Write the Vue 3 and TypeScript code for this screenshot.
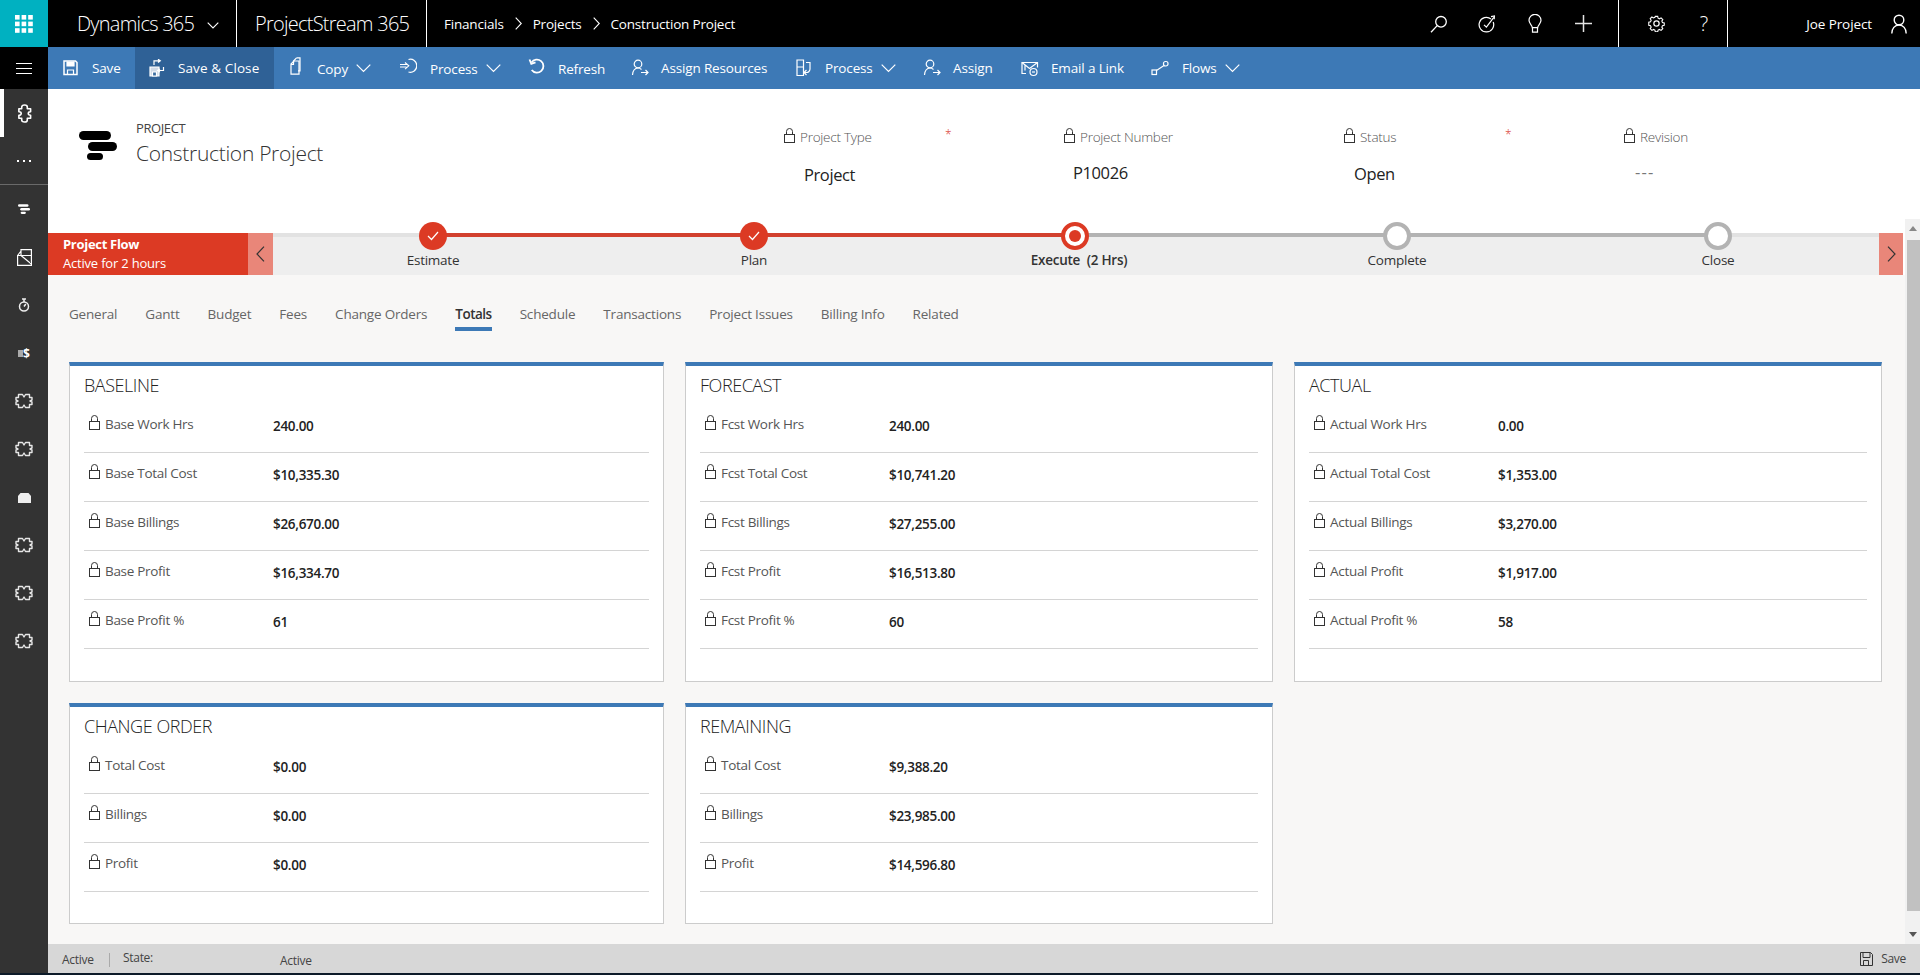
<script setup lang="ts">
const crumbs = ['Financials', 'Projects', 'Construction Project']
interface Cmd { label: string; icon: string; w: number; gap: number; chevron?: boolean; active?: boolean; low?: boolean }
const commands: Cmd[] = [
  { label: 'Save', icon: 'save', w: 87, gap: 30 },
  { label: 'Save & Close', icon: 'saveclose', w: 139, gap: 30, active: true },
  { label: 'Copy', icon: 'copy', w: 111, gap: 29, chevron: true, low: true },
  { label: 'Process', icon: 'process', w: 129, gap: 31, chevron: true, low: true },
  { label: 'Refresh', icon: 'refresh', w: 103, gap: 30, low: true },
  { label: 'Assign Resources', icon: 'assignres', w: 164, gap: 30 },
  { label: 'Process', icon: 'process2', w: 128, gap: 30, chevron: true },
  { label: 'Assign', icon: 'assign', w: 98, gap: 30 },
  { label: 'Email a Link', icon: 'email', w: 130, gap: 30 },
  { label: 'Flows', icon: 'flows', w: 110, gap: 31, chevron: true },
]
const headerFields = [
  { label: 'Project Type', value: 'Project', req: true, cls: 'v1' },
  { label: 'Project Number', value: 'P10026', req: false, cls: 'v2' },
  { label: 'Status', value: 'Open', req: true, cls: 'v3' },
  { label: 'Revision', value: '---', req: false, cls: 'v4' },
]
const steps = [
  { label: 'Estimate', state: 'done', x: 160 },
  { label: 'Plan', state: 'done', x: 321 },
  { label: 'Execute', extra: '(2 Hrs)', state: 'current', x: 321 },
  { label: 'Complete', state: 'todo', x: 322 },
  { label: 'Close', state: 'todo', x: 321 },
]
const tabs = ['General', 'Gantt', 'Budget', 'Fees', 'Change Orders', 'Totals', 'Schedule', 'Transactions', 'Project Issues', 'Billing Info', 'Related']
const cards = [
  { title: 'BASELINE', rows: [['Base Work Hrs', '240.00'], ['Base Total Cost', '$10,335.30'], ['Base Billings', '$26,670.00'], ['Base Profit', '$16,334.70'], ['Base Profit %', '61']] },
  { title: 'FORECAST', rows: [['Fcst Work Hrs', '240.00'], ['Fcst Total Cost', '$10,741.20'], ['Fcst Billings', '$27,255.00'], ['Fcst Profit', '$16,513.80'], ['Fcst Profit %', '60']] },
  { title: 'ACTUAL', rows: [['Actual Work Hrs', '0.00'], ['Actual Total Cost', '$1,353.00'], ['Actual Billings', '$3,270.00'], ['Actual Profit', '$1,917.00'], ['Actual Profit %', '58']] },
  { title: 'CHANGE ORDER', rows: [['Total Cost', '$0.00'], ['Billings', '$0.00'], ['Profit', '$0.00']] },
  { title: 'REMAINING', rows: [['Total Cost', '$9,388.20'], ['Billings', '$23,985.00'], ['Profit', '$14,596.80']] },
]
const sideIcons = ['logo', 'book', 'timer', 'money', 'puzzle', 'puzzle', 'box', 'puzzle', 'puzzle', 'puzzle']
</script>

<template>
  <div class="page">
    <header class="topbar">
      <div class="tile">
        <svg width="18" height="18" viewBox="0 0 18 18" fill="#fff"><g>
          <rect x="0" y="0" width="4.6" height="4.6"/><rect x="6.6" y="0" width="4.6" height="4.6"/><rect x="13.2" y="0" width="4.6" height="4.6"/>
          <rect x="0" y="6.6" width="4.6" height="4.6"/><rect x="6.6" y="6.6" width="4.6" height="4.6"/><rect x="13.2" y="6.6" width="4.6" height="4.6"/>
          <rect x="0" y="13.2" width="4.6" height="4.6"/><rect x="6.6" y="13.2" width="4.6" height="4.6"/><rect x="13.2" y="13.2" width="4.6" height="4.6"/>
        </g></svg>
      </div>
      <div class="app-name">
        <span class="brand">Dynamics 365</span>
        <svg class="brand-chev" width="12" height="7" viewBox="0 0 12 7" fill="none" stroke="#fff" stroke-width="1.1"><path d="M.7.7L6 6l5.3-5.3"/></svg>
      </div>
      <div class="app-name second"><span class="brand">ProjectStream 365</span></div>
      <nav class="crumbs">
        <template v-for="(c, i) in crumbs" :key="c">
          <span>{{ c }}</span>
          <svg v-if="i < crumbs.length - 1" width="7" height="13" viewBox="0 0 7 13" fill="none" stroke="#fff" stroke-width="1.1"><path d="M.7.7l5.6 5.8L.7 12.3"/></svg>
        </template>
      </nav>
      <div class="top-icons">
        <span class="ti"><svg width="18" height="18" viewBox="0 0 18 18" fill="none" stroke="#fff" stroke-width="1.3"><circle cx="11" cy="6.8" r="5.3"/><path d="M7.2 10.6L1 17.2"/></svg></span>
        <span class="ti"><svg width="18" height="18" viewBox="0 0 18 18" fill="none" stroke="#fff" stroke-width="1.2"><path d="M13 4a7.3 7.3 0 1 0 2.2 3"/><path d="M6 9.8l2.4 2.4L15.8 2.4"/><path d="M13 1.600l3.400-.6-.2 3.200"/></svg></span>
        <span class="ti"><svg width="14" height="19" viewBox="0 0 14 19" fill="none" stroke="#fff" stroke-width="1.2"><path d="M4.3 13.6c0-2.600-3.300-3.800-3.300-7.300a6 6 0 0 1 12 0c0 3.500-3.300 4.700-3.300 7.300z"/><path d="M4.500 13.600v4.600h5v-4.600"/></svg></span>
        <span class="ti"><svg width="17" height="17" viewBox="0 0 17 17" fill="none" stroke="#e4e4e4" stroke-width="1.5"><path d="M8.5 0v17M0 8.500h17"/></svg></span>
      </div>
      <div class="top-help">
        <span class="ti"><svg width="17" height="17" viewBox="0 0 18 18" fill="none" stroke="#fff" stroke-width="1.3"><circle cx="9" cy="9" r="2.8"/><path d="M7.600 1.200h2.800l.5 2.100 1.600.7 1.900-1.100 2 2-1.100 1.900.7 1.600 2.100.5v2.800l-2.100.5-.7 1.600 1.100 1.900-2 2-1.900-1.100-1.600.7-.5 2.100H7.600l-.5-2.100-1.600-.7-1.900 1.100-2-2 1.100-1.900-.7-1.600-2.100-.5V7.900l2.100-.5.700-1.600-1.100-1.900 2-2 1.900 1.100 1.600-.7z" transform="translate(.9 .4) scale(.9)"/></svg></span>
        <span class="ti help">?</span>
      </div>
      <div class="user">
        <span>Joe Project</span>
        <svg width="16" height="20" viewBox="0 0 16 20" fill="none" stroke="#fff" stroke-width="1.4"><circle cx="8" cy="6" r="4.800"/><path d="M.8 19.500c0-5 3-8.500 7.200-8.500s7.200 3.500 7.200 8.500"/></svg>
      </div>
    </header>

    <div class="commandbar">
      <div class="hamburger"><span></span><span></span><span></span></div>
      <div v-for="c in commands" :key="c.label + c.icon" class="cmd" :class="{ active: c.active, low: c.low }" :style="{ width: c.w + 'px' }">
        <span class="cmd-icon" :style="{ width: c.gap + 'px' }">
          <svg width="18" height="18" viewBox="0 0 18 18" fill="none" stroke="#fff" stroke-width="1.2">
            <template v-if="c.icon === 'save'"><path d="M2 2h11.500L15 3.500V15.500H2z" stroke-width="1.5"/><path d="M5 2.500v4.500h7V2.500" fill="#fff"/><path d="M5.500 15v-4h6v4"/></template>
            <template v-else-if="c.icon === 'saveclose'"><path d="M2 8h9v9H2z" fill="#cfd9e6" stroke="#fff"/><path d="M4.500 13h4v4h-4z" fill="#3a6ca0"/><path d="M6 6V1.800h6M10 .2l2.300 1.600L10 3.500M15.500 8v3.500h-6M12 10l-2.500 1.500L12 13"/></template>
            <template v-else-if="c.icon === 'copy'"><path d="M8.500.8l-3 3.200v2"/><path d="M8.500.8h3.500v13H10"/><path d="M3 7l3-3h5v13.200H3z"/><path d="M5.500 4.500V7.500H3"/></template>
            <template v-else-if="c.icon === 'process'"><path d="M1 7.500h6.500M1 10h6.500M6 5.500L9.800 8.800 6 12.200" stroke-width="1.1"/><path d="M9.500 2.500a6.500 6.500 0 1 1 0 12.500"/></template>
            <template v-else-if="c.icon === 'refresh'"><path d="M3.500 5.500a6.500 6.500 0 1 1 .2 7.500" stroke-width="1.8"/><path d="M1.500 2.500l1.800 4.400 4.200-1.500" stroke-width="1.8"/></template>
            <template v-else-if="c.icon === 'assignres'"><circle cx="7" cy="5" r="3.800"/><path d="M1.500 16c0-4 2.300-7 5.500-7 1.500 0 2.500.5 3.500 1.500"/><path d="M10 13.500h7M14.500 11l2.500 2.500-2.500 2.500"/></template>
            <template v-else-if="c.icon === 'process2'"><path d="M2 1h6.500v7H2zM2 8h6.500v8.500H2z"/><path d="M11 3.500h4V10a3.500 3.500 0 0 1-3.500 3.500H9M11.500 11L9 13.500l2.500 2.500"/></template>
            <template v-else-if="c.icon === 'assign'"><circle cx="7" cy="5" r="3.800"/><path d="M1.500 16c0-4 2.300-7 5.500-7 1.500 0 2.500.5 3.500 1.500"/><path d="M10 13.500h7M14.500 11l2.500 2.500-2.500 2.500"/></template>
            <template v-else-if="c.icon === 'email'"><path d="M5 14.500H1v-11h15.500v5"/><path d="M1 3.500l7.500 6 8-6M4 6v5.500"/><circle cx="12.500" cy="13" r="3.500"/><path d="M11 13h3"/></template>
            <template v-else><rect x="1" y="11" width="4.500" height="4.500"/><rect x="12.500" y="2.500" width="4.500" height="4.500" rx="2"/><path d="M5.500 11.500L13 6.500"/></template>
          </svg>
        </span>
        <span class="cmd-label">{{ c.label }}</span>
        <svg v-if="c.chevron" class="cmd-chev" width="15" height="9" viewBox="0 0 15 9" fill="none" stroke="#fff" stroke-width="1.2"><path d="M.7.7l6.800 6.800L14.300.7"/></svg>
      </div>
    </div>

    <div class="body">
      <aside class="sidebar">
        <div class="side-home">
          <svg width="15" height="19" viewBox="0 0 16 20" fill="none" stroke="#fff" stroke-width="1.7" stroke-linejoin="round"><path d="M5 5V3.200Q5 1 8 1t3 2.200V5h3.500v3.200Q12 8.200 12 10t2.500 1.800V15H11v1.800Q11 19 8 19t-3-2.200V15H2v-3.200Q4.500 11.800 4.500 10T2 8.200V5z"/></svg>
        </div>
        <div class="side-more"><span></span><span></span><span></span></div>
        <div class="side-list">
          <div v-for="(s, i) in sideIcons" :key="i" class="side-item">
            <svg v-if="s === 'logo'" width="12" height="10" viewBox="0 0 16 13" fill="#fff"><rect x="0" y="0" width="14" height="3.500" rx="1.700"/><rect x="3" y="5" width="13" height="3.500" rx="1.700"/><rect x="3.500" y="10" width="7" height="3" rx="1.500"/></svg>
            <svg v-else-if="s === 'book'" width="15" height="17" viewBox="0 0 15 17" fill="none" stroke="#fff" stroke-width="1.2"><path d="M.6 16.400V6.500h13.800v9.900zM.6 6.500L4 2M4 6.500V.6h10.400v15.800M4 6.500l10.400 8.500"/></svg>
            <svg v-else-if="s === 'timer'" width="12" height="14" viewBox="0 0 12 14" fill="none" stroke="#eee" stroke-width="1.5"><circle cx="6" cy="8.500" r="4.500"/><path d="M6 8.500l1.800-2.500M4 1h4M6 1v3"/></svg>
            <span v-else-if="s === 'money'" class="money"><i></i>$</span>
            <svg v-else-if="s === 'box'" width="13" height="11" viewBox="0 0 13 11" fill="#eee"><path d="M0 4L2.500 1h8L13 4v7H0z"/></svg>
            <svg v-else width="18" height="16" viewBox="0 0 18 16" fill="none" stroke="#e6e6e6" stroke-width="1.4" stroke-linejoin="round"><path d="M3.500 3V1.500h4L9 4l1.500-2.500h4v3H17V7l-2 1 2 1v2.500h-2.500v3h-4L9 12l-1.500 2.500h-4v-3H1V9l2-1-2-1V4.500h2.500z"/></svg>
          </div>
        </div>
      </aside>

      <main class="main">
        <section class="record">
          <div class="record-title">
            <svg class="logo" width="38" height="30" viewBox="0 0 38 30" fill="#000"><rect x="0" y="0" width="32" height="9" rx="4.500"/><rect x="9" y="11" width="29" height="9" rx="4.500"/><rect x="8" y="22" width="16" height="7" rx="3.500"/></svg>
            <div>
              <div class="entity">PROJECT</div>
              <div class="record-name">Construction Project</div>
            </div>
          </div>
          <div class="record-fields">
            <div v-for="f in headerFields" :key="f.label" class="hfield">
              <div class="hlabel">
                <svg class="lock" width="11" height="15" viewBox="0 0 11 15" fill="none" stroke="#333" stroke-width="1"><rect x=".5" y="6.500" width="10" height="8"/><path d="M2.500 6.500V3.500a3 3 0 0 1 6 0v3"/></svg>
                <span>{{ f.label }}</span>
                <i v-if="f.req" class="req">*</i>
              </div>
              <div class="hvalue" :class="f.cls">{{ f.value }}</div>
            </div>
          </div>
        </section>

        <section class="flow">
          <div class="flow-head">
            <strong>Project Flow</strong>
            <span>Active for 2 hours</span>
          </div>
          <div class="flow-arrow"><svg width="9" height="16" viewBox="0 0 9 16" fill="none" stroke="#333" stroke-width="1.2"><path d="M8 .7L1 8l7 7.300"/></svg></div>
          <div class="flow-track">
            <div class="flow-line red"></div>
            <div class="flow-line grey"></div>
            <div v-for="s in steps" :key="s.label" class="step" :style="{ width: s.x + 'px' }">
              <span class="dot" :class="s.state">
                <svg v-if="s.state === 'done'" width="12" height="10" viewBox="0 0 12 10" fill="none" stroke="#fff" stroke-width="1.2"><path d="M1 5l3.500 3.500L11 1"/></svg>
              </span>
              <span class="step-label" :class="{ strong: s.state === 'current' }">{{ s.label }}<template v-if="s.extra">&nbsp; {{ s.extra }}</template></span>
            </div>
          </div>
          <div class="flow-arrow right"><svg width="9" height="16" viewBox="0 0 9 16" fill="none" stroke="#333" stroke-width="1.2"><path d="M1 .7L8 8l-7 7.300"/></svg></div>
        </section>

        <div class="content">
          <div class="form">
            <nav class="tabs">
              <span v-for="t in tabs" :key="t" class="tab" :class="{ on: t === 'Totals' }">{{ t }}</span>
            </nav>
            <div class="cards">
              <article v-for="c in cards" :key="c.title" class="card">
                <h2>{{ c.title }}</h2>
                <div v-for="r in c.rows" :key="r[0]" class="row">
                  <div class="row-label">
                    <svg class="lock" width="11" height="15" viewBox="0 0 11 15" fill="none" stroke="#333" stroke-width="1"><rect x=".5" y="6.500" width="10" height="8"/><path d="M2.500 6.500V3.500a3 3 0 0 1 6 0v3"/></svg>
                    <span>{{ r[0] }}</span>
                  </div>
                  <div class="row-value">{{ r[1] }}</div>
                </div>
              </article>
            </div>
          </div>
          <div class="scrollbar">
            <i class="up"></i>
            <div class="thumb"></div>
            <i class="down"></i>
          </div>
        </div>

        <footer class="status">
          <span class="st-a">Active</span>
          <span class="st-b">State:</span>
          <span class="st-c">Active</span>
          <span class="st-save">
            <svg width="13" height="14" viewBox="0 0 13 14" fill="none" stroke="#333" stroke-width="1"><path d="M.5.500h10l2 2v11H.5z"/><path d="M3 .500v5h7v-5M3.500 13.500v-5h5v5"/></svg>
            Save
          </span>
        </footer>
      </main>
    </div>
  </div>
</template>

<style>
html, body { margin: 0; padding: 0; background: #fff; overflow: hidden; }
</style>

<style scoped>
.page { width: 1920px; height: 975px; display: flex; flex-direction: column; font-family: "Open Sans", "Noto Sans", sans-serif; color: #333; overflow: hidden; }
.topbar { height: 47px; background: #000; color: #fff; display: flex; align-items: center; flex: none; }
.tile { width: 48px; height: 47px; background: #00b1c1; display: flex; align-items: center; justify-content: center; }
.app-name { height: 47px; box-sizing: border-box; width: 189px; padding-left: 29px; border-right: 1px solid #fff; display: flex; align-items: center; }
.app-name.second { width: 190px; padding-left: 18px; }
.brand { font-size: 20px; font-weight: 300; letter-spacing: -.75px; white-space: nowrap; }
.brand-chev { margin-left: 13px; margin-top: 3px; }
.crumbs { display: flex; align-items: center; font-size: 13.5px; letter-spacing: -.2px; margin-left: 17px; gap: 11px; white-space: nowrap; }
.ti { width: 48px; height: 47px; display: flex; align-items: center; justify-content: center; flex: none; }
.top-icons { margin-left: auto; display: flex; align-items: center; box-sizing: border-box; padding-right: 11px; height: 47px; border-right: 1px solid #fff; }
.top-help { width: 109px; height: 47px; box-sizing: border-box; border-right: 1px solid #fff; display: flex; align-items: center; padding-left: 13px; }
.help { font-size: 20px; font-weight: 300; }
.user { width: 192px; box-sizing: border-box; display: flex; align-items: center; justify-content: flex-end; padding-right: 13px; gap: 19px; font-size: 13.5px; letter-spacing: -.1px; }
.commandbar { height: 42px; background: #3d79b6; color: #fff; display: flex; align-items: center; flex: none; font-size: 13.5px; letter-spacing: -.15px; }
.hamburger { width: 48px; height: 42px; background: #000; display: flex; flex-direction: column; justify-content: center; align-items: center; gap: 4px; }
.hamburger span { width: 16px; height: 1px; background: #fff; display: block; }
.cmd { height: 42px; display: flex; align-items: center; box-sizing: border-box; padding-left: 14px; white-space: nowrap; flex: none; }
.cmd.active { background: #2f6196; padding-left: 13px; letter-spacing: .1px; }
.cmd-icon { display: flex; align-items: center; flex: none; }
.cmd.low .cmd-icon { margin-top: -4px; }
.cmd.low .cmd-label { margin-top: 2px; }
.cmd-chev { margin-left: 8px; }
.body { flex: 1; display: flex; min-height: 0; }
.sidebar { width: 48px; flex: none; background: #333; display: flex; flex-direction: column; border-bottom: 2px solid #0c1a28; box-sizing: border-box; }
.side-home { height: 48px; border-left: 4px solid #fff; display: flex; align-items: center; justify-content: center; padding-right: 4px; box-sizing: border-box; width: 48px; }
.side-more { height: 48px; border-bottom: 1px solid #6a6a6a; display: flex; align-items: center; justify-content: center; gap: 4px; box-sizing: border-box; }
.side-more span { width: 2px; height: 2px; background: #fff; display: block; }
.side-list { display: flex; flex-direction: column; }
.side-item { height: 48px; display: flex; align-items: center; justify-content: center; }
.money { color: #fff; font-size: 12px; font-weight: 700; display: flex; align-items: center; letter-spacing: 0; }
.money i { width: 5px; height: 7px; background: #aaa; display: block; margin-top: 1px; }
.main { flex: 1; display: flex; flex-direction: column; min-width: 0; background: #f8f7f6; }
.record { height: 130px; background: #fff; display: flex; flex: none; position: relative; }
.record-title { width: 736px; box-sizing: border-box; padding: 31px 0 0 31px; display: flex; gap: 19px; }
.logo { margin-top: 11px; }
.entity { font-size: 13px; letter-spacing: -.4px; line-height: 16px; color: #444; }
.record-name { font-size: 21px; font-weight: 300; line-height: 28px; margin-top: 3px; letter-spacing: -.3px; color: #333; }
.record-fields { display: flex; padding-top: 39px; }
.hfield { width: 280px; }
.hlabel { position: relative; display: flex; align-items: flex-start; gap: 5px; font-size: 13.5px; font-weight: 300; color: #555; letter-spacing: -.25px; line-height: 18px; }
.req { position: absolute; left: 161px; top: -2px; color: #d9342a; font-style: normal; font-size: 12px; }
.hvalue { font-size: 16.5px; line-height: 24px; color: #222; letter-spacing: -.4px; margin-top: 17px; }
.v1 { padding-left: 20px; }
.v2 { padding-left: 9px; margin-top: 15px; }
.v3 { padding-left: 10px; margin-top: 16px; }
.v4 { padding-left: 11px; margin-top: 14px; color: #777; letter-spacing: 1.2px; }
.flow { flex: none; height: 56px; display: flex; align-items: flex-start; position: relative; background: #fff; }
.flow-head { margin-top: 14px; width: 200px; height: 42px; box-sizing: border-box; background: #dc3a24; color: #fff; padding: 2px 0 0 15px; display: flex; flex-direction: column; font-size: 13px; letter-spacing: -.2px; line-height: 19px; }
.flow-head strong { font-weight: 700; letter-spacing: -.3px; }
.flow-arrow { margin-top: 14px; width: 25px; height: 42px; background: #e98679; display: flex; align-items: center; justify-content: center; flex: none; }
.flow-arrow.right { width: 24px; }
.flow-track { margin-top: 14px; width: 1606px; height: 42px; background: #eee; border-top: 4px solid #e2e2e2; box-sizing: border-box; position: relative; display: flex; }
.flow-line { position: absolute; top: -4px; height: 4px; }
.flow-line.red { left: 160px; width: 642px; background: #d2402e; }
.flow-line.grey { left: 802px; width: 643px; background: #b3b3b3; }
.step { display: flex; flex-direction: column; align-items: flex-end; flex: none; position: relative; height: 38px; }
.dot { position: absolute; right: -14px; top: -15px; width: 28px; height: 28px; box-sizing: border-box; border-radius: 50%; display: flex; align-items: center; justify-content: center; z-index: 1; }
.dot.done { background: #dc3a24; }
.dot.current { background: #fff; border: 4px solid #dc3a24; }
.dot.current::after { content: ""; width: 12px; height: 12px; background: #dc3a24; border-radius: 50%; }
.dot.todo { background: #fff; border: 4px solid #b3b3b3; }
.step-label { position: absolute; right: 0; transform: translateX(50%); top: 14px; font-size: 13.5px; letter-spacing: -.25px; line-height: 18px; white-space: nowrap; color: #333; }
.step-label.strong { font-weight: 600; transform: translateX(calc(50% + 4px)); }
.content { flex: 1; display: flex; min-height: 0; position: relative; }
.form { flex: 1; min-width: 0; padding: 0 0 0 21px; }
.tabs { height: 87px; display: flex; gap: 28px; font-size: 13.5px; letter-spacing: -.2px; color: #666; box-sizing: border-box; padding-top: 30px; align-items: flex-start; }
.tab { height: 26px; line-height: 18px; box-sizing: border-box; white-space: nowrap; }
.tab.on { color: #333; font-weight: 600; border-bottom: 4px solid #3d79b6; letter-spacing: -.5px; }
.cards { display: grid; grid-template-columns: 595px 588px 588px; column-gap: 21px; row-gap: 21px; grid-auto-rows: min-content; }
.card { background: #fff; border: 1px solid #ccc; border-top: 4px solid #3d79b6; box-sizing: border-box; padding: 0 14px; }
.card:nth-child(-n+3) { height: 320px; }
.card:nth-child(n+4) { height: 221px; }
.card h2 { margin: 0; font-size: 18px; font-weight: 300; color: #222; line-height: 24px; height: 31px; padding-top: 7px; letter-spacing: -.45px; box-sizing: content-box; }
.row { height: 49px; border-bottom: 1px solid #d4d4d4; box-sizing: border-box; display: flex; }
.row-label { width: 189px; display: flex; align-items: flex-start; gap: 5px; padding: 11px 0 0 5px; box-sizing: border-box; font-size: 13.5px; letter-spacing: -.3px; color: #555; line-height: 18px; }
.lock { flex: none; }
.row-value { font-size: 13.5px; font-weight: 600; color: #222; padding-top: 13px; letter-spacing: -.3px; line-height: 18px; }
.scrollbar { position: absolute; right: 0; top: -56px; bottom: 0; width: 15px; background: #f1f1f1; display: flex; flex-direction: column; align-items: center; }
.scrollbar .thumb { width: 13px; margin-left: 1px; height: 671px; background: #c1c1c1; margin-top: 9px; }
.scrollbar .up { width: 0; height: 0; border: 4px solid transparent; border-bottom: 5px solid #888; border-top: 0; margin-top: 7px; }
.scrollbar .down { width: 0; height: 0; border: 4px solid transparent; border-top: 5px solid #555; border-bottom: 0; margin-top: auto; margin-bottom: 7px; }
.status { height: 31px; flex: none; background: #d7d7d7; display: flex; font-size: 12px; letter-spacing: -.3px; color: #444; border-bottom: 2px solid #0c1a28; box-sizing: border-box; align-items: center; }
.st-a { margin-left: 14px; width: 35px; padding-right: 12px; border-right: 1px solid #aaa; height: 14px; line-height: 14px; margin-top: 2px; }
.st-b { margin-left: 13px; width: 157px; line-height: 14px; margin-top: -2px; }
.st-c { margin-top: 3px; }
.st-save { margin-left: auto; display: flex; align-items: center; gap: 8px; margin-right: 14px; }
</style>
